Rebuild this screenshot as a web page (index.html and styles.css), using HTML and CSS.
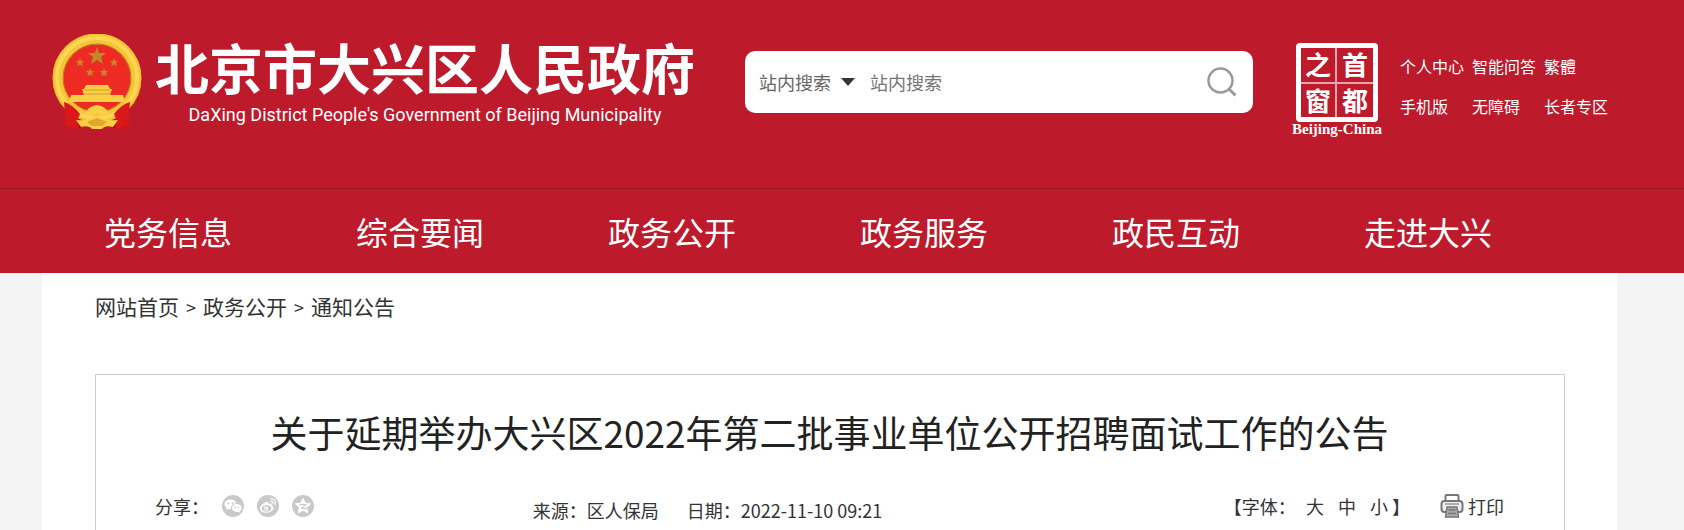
FILE: index.html
```html
<!DOCTYPE html>
<html lang="zh-CN">
<head>
    <meta charset="UTF-8">
    <meta name="viewport" content="width=device-width, initial-scale=1.0">
    <title>关于延期举办大兴区2022年第二批事业单位公开招聘面试工作的公告</title>
    <link rel="stylesheet" href="styles.css">
</head>
<body>
    <header class="header">
        <div class="top">
            <a class="logo" href="#">
                <svg class="emblem" viewBox="0 0 90 96" aria-hidden="true">
                    <path d="M14 68 L12 90 Q20 98 30 94 L45 90 L60 94 Q70 98 78 90 L76 68 Z" fill="#d5161b"/>
                    <path d="M19 76 L18 93 M26 80 L28 94 M71 76 L72 93 M64 80 L62 94" stroke="#9f0f16" stroke-width="2" fill="none"/>
                    <circle cx="45" cy="44" r="39" fill="#ee2a24" stroke="#f5c535" stroke-width="11"/>
                    <circle cx="45" cy="44" r="40" fill="none" stroke="#fbd655" stroke-width="4"/>
                    <circle cx="45" cy="44" r="34" fill="none" stroke="#b5761c" stroke-width="1"/>
                    <path d="M12 68 Q20 70 28 80 Q24 88 26 95 L14 91 Z M78 68 Q70 70 62 80 Q66 88 64 95 L76 91 Z" fill="#d9181c"/>
                    <g fill="#c08a2a">
                        <path d="M45 13 L47 19 L54 19 L49 23 L51 30 L45 26 L39 30 L41 23 L36 19 L43 19 Z"/>
                        <path d="M28 24 l1.200 3 3.200 .1 -2.500 2 .9 3.100 -2.800 -1.700 -2.800 1.700 .9 -3.100 -2.500 -2 3.200 -.1z"/>
                        <path d="M62 24 l1.200 3 3.200 .1 -2.500 2 .9 3.100 -2.800 -1.700 -2.800 1.700 .9 -3.100 -2.500 -2 3.200 -.1z"/>
                        <path d="M38 34 l1.200 3 3.200 .1 -2.500 2 .9 3.100 -2.800 -1.700 -2.800 1.700 .9 -3.100 -2.500 -2 3.200 -.1z"/>
                        <path d="M52 34 l1.200 3 3.200 .1 -2.500 2 .9 3.100 -2.800 -1.700 -2.800 1.700 .9 -3.100 -2.500 -2 3.200 -.1z"/>
                    </g>
                    <path d="M34 51 H56 L58 55 H60 L58 61 H71 L73 68 H17 L19 61 H32 L30 55 H32 Z" fill="#f9cf45"/>
                    <path d="M32 56 H58 M31 60 H59" stroke="#d9982a" stroke-width="1"/>
                    <path d="M33 80 Q36 72 45 71 Q54 72 57 80 Q50 84 45 79 Q40 84 33 80 Z" fill="#f9cf45"/>
                    <path d="M24 86 Q36 87 45 82 Q54 87 66 86 L61 93 Q53 91 50 95 H40 Q37 91 29 93 Z" fill="#f9cf45"/>
                    <path d="M35 88 L45 84 L55 88 L50 92 H40 Z" fill="#dfa82c"/>
                </svg>
                <span class="logo-text">
                    <span class="logo-cn">北京市大兴区人民政府</span>
                    <span class="logo-en">DaXing District People's Government of Beijing Municipality</span>
                </span>
            </a>

            <form class="search">
                <select class="search-type" aria-label="搜索范围">
                    <option>站内搜索</option>
                </select>
                <svg class="search-arrow" viewBox="0 0 14 8" aria-hidden="true"><path d="M0 0 H14 L7 8 Z" fill="#333"/></svg>
                <input class="search-input" type="text" placeholder="站内搜索" aria-label="站内搜索">
                <button class="search-btn" type="submit" aria-label="搜索">
                    <svg viewBox="0 0 30 30" fill="none" stroke="#999" stroke-width="2.500"><circle cx="13.500" cy="13.500" r="12"/><path d="M21.500 21.500 L28.500 28.500" stroke-width="3"/></svg>
                </button>
            </form>

            <a class="seal" href="#">
                <span class="seal-box">
                    <span>之</span><span>首</span>
                    <span>窗</span><span>都</span>
                </span>
                <span class="seal-en">Beijing-China</span>
            </a>

            <div class="links">
                <a href="#">个人中心</a>
                <a href="#">智能问答</a>
                <a href="#">繁體</a>
                <a href="#">手机版</a>
                <a href="#">无障碍</a>
                <a href="#">长者专区</a>
            </div>
        </div>

        <nav class="nav">
            <a href="#">党务信息</a>
            <a href="#">综合要闻</a>
            <a href="#">政务公开</a>
            <a href="#">政务服务</a>
            <a href="#">政民互动</a>
            <a href="#">走进大兴</a>
        </nav>
    </header>

    <main class="main">
        <div class="crumbs">
            <a href="#">网站首页</a><span>&gt;</span><a href="#">政务公开</a><span>&gt;</span><a href="#">通知公告</a>
        </div>

        <article class="article">
            <h1>关于延期举办大兴区2022年第二批事业单位公开招聘面试工作的公告</h1>
            <div class="meta">
                <div class="share">
                    <span>分享：</span>
                    <!-- 微信 -->
                    <a href="#" aria-label="微信">
                        <svg viewBox="0 0 22 22">
                            <circle cx="11" cy="11" r="11" fill="#c9c9c9"/>
                            <path d="M8.500 4.500 C5 4.500 2.500 6.700 2.500 9.300 C2.500 10.900 3.300 12.200 4.700 13.100 L4.200 15 L6.500 13.900 L9 14.200 C8.500 10.500 11.500 8.300 14.500 8.300 C13.800 6 11.500 4.500 8.500 4.500 Z" fill="#fff"/>
                            <path d="M14.800 9 C12 9 9.900 10.800 9.900 13 C9.900 15.200 12 16.900 14.800 16.900 L16.400 16.700 L18.200 17.700 L17.800 16 C19 15.300 19.800 14.200 19.800 13 C19.800 10.800 17.600 9 14.800 9 Z" fill="#fff"/>
                            <g fill="#c9c9c9"><circle cx="6.500" cy="8.300" r="1"/><circle cx="10.500" cy="8.300" r="1"/><circle cx="13.200" cy="12" r=".8"/><circle cx="16.500" cy="12" r=".8"/></g>
                        </svg>
                    </a>
                    <!-- 微博 -->
                    <a href="#" aria-label="微博">
                        <svg viewBox="0 0 22 22">
                            <circle cx="11" cy="11" r="11" fill="#c9c9c9"/>
                            <path d="M9.300 7 C10.800 6.500 11.400 7.500 11 8.900 C13.500 8 15 8.500 14.600 10.600 C16 11 16.700 12 16.500 13.300 C16 16 13 17.700 9.500 17.700 C5.800 17.700 3 16 3 13.400 C3 10.800 6.500 7.800 9.300 7 Z" fill="#fff"/>
                            <ellipse cx="9.500" cy="13.400" rx="4.600" ry="3.100" fill="#c9c9c9"/>
                            <circle cx="9" cy="13.600" r="2.200" fill="#fff"/>
                            <circle cx="8.500" cy="14" r=".9" fill="#c9c9c9"/>
                            <path d="M13.500 4 C17 3.300 19.300 6 18.300 9.500 M13.800 6.500 C15.700 6.200 16.600 7.400 16.100 9" fill="none" stroke="#fff" stroke-width="1.200" stroke-linecap="round"/>
                        </svg>
                    </a>
                    <!-- QQ空间 -->
                    <a href="#" aria-label="QQ空间">
                        <svg viewBox="0 0 22 22">
                            <circle cx="11" cy="11" r="11" fill="#c9c9c9"/>
                            <path d="M11 3.500 L13.300 8.200 L18.500 8.900 L14.700 12.600 L15.700 17.800 L11 15.300 L6.300 17.800 L7.300 12.600 L3.500 8.900 L8.700 8.200 Z" fill="#fff" stroke="#fff" stroke-linejoin="round"/>
                            <path d="M7.700 9.800 Q11 8.900 13.800 9.800 L9.500 13.200 Q12 13.900 15.500 13" fill="none" stroke="#c9c9c9" stroke-width="1.200"/>
                        </svg>
                    </a>
                </div>

                <div class="source">
                    <span>来源：区人保局</span>
                    <span>日期：2022-11-10 09:21</span>
                </div>

                <div class="tools">
                    <span class="font-size">【字体：
                        <button type="button">大</button>
                        <button type="button">中</button>
                        <button type="button">小</button>】</span>
                    <button class="print" type="button">
                        <svg viewBox="0 0 24 24" aria-hidden="true">
                            <path d="M5.500 7 V2 Q5.500 1 6.500 1 H17.500 Q18.500 1 18.500 2 V7" fill="#fff" stroke="#777" stroke-width="2"/>
                            <rect x="1.500" y="7" width="21" height="11" rx="3" fill="#eee" stroke="#777" stroke-width="2"/>
                            <path d="M5 10 H19" stroke="#999" stroke-width="1.500"/>
                            <path d="M7 13 H17 L18.500 23 H5.500 Z" fill="#aaa" stroke="#777" stroke-width="1.500"/>
                            <path d="M8.500 16 H15.500 M8 19.500 H16" stroke="#777" stroke-width="1.500"/>
                        </svg>
                        打印
                    </button>
                </div>
            </div>
        </article>
    </main>
</body>
</html>
```
FILE: styles.css
```css
* {
    box-sizing: border-box;
}
body {
    margin: 0;
    background-color: #f4f4f4;
    font-family: "Noto Sans CJK SC", sans-serif;
    font-size: 18px;
    color: #333;
}
a {
    color: inherit;
    text-decoration: none;
}
button, select, input {
    font: inherit;
    color: inherit;
    border: none;
    background: none;
    padding: 0;
    margin: 0;
}
button {
    cursor: pointer;
}
svg {
    display: block;
}

/* 页头 */
.header {
    background-color: #bd1a2c;
    color: #fff;
}
.top {
    display: flex;
    align-items: flex-start;
    height: 188px;
    padding: 34px 68px 0 52px;
}
.logo {
    display: flex;
    gap: 13px;
}
.emblem {
    width: 90px;
    height: 96px;
}
.logo-text {
    display: flex;
    flex-direction: column;
    align-items: center;
    padding-top: 3px;
}
.logo-cn {
    font-size: 54px;
    font-weight: bold;
    line-height: 60px;
    white-space: nowrap;
}
.logo-en {
    font-family: Roboto, sans-serif;
    font-size: 18px;
    line-height: 36px;
    white-space: nowrap;
}
.search {
    flex: 1;
    display: flex;
    align-items: center;
    height: 62px;
    margin: 17px 39px 0 50px;
    padding: 0 16px 0 14px;
    border-radius: 10px;
    background-color: #fff;
    color: #666;
}
.search-type {
    appearance: none;
}
.search-arrow {
    width: 14px;
    height: 8px;
    margin: 0 15px 0 10px;
}
.search-input {
    flex: 1;
    min-width: 0;
    outline: none;
}
.search-input::placeholder {
    color: #757575;
}
.search-btn svg {
    width: 30px;
    height: 30px;
}

/* 首都之窗 */
.seal {
    display: flex;
    flex-direction: column;
    align-items: center;
    margin: 9px 18px 0 0;
}
.seal-box {
    display: grid;
    grid-template-columns: 1fr 1fr;
    width: 82px;
    height: 79px;
    border: 5px solid #fff;
    border-radius: 4px;
    font-size: 26px;
    font-weight: bold;
    line-height: 32px;
    text-align: center;
}
.seal-box span:nth-child(odd) {
    border-right: 2px solid #e6a5ac;
}
.seal-box span:nth-child(-n+2) {
    border-bottom: 2px solid #e6a5ac;
}
.seal-en {
    font-family: "Liberation Serif", serif;
    font-size: 15px;
    font-weight: bold;
    line-height: 14px;
}
.links {
    display: grid;
    grid-template-columns: repeat(3, 72px);
    row-gap: 16px;
    padding-top: 20px;
    font-size: 16px;
    line-height: 24px;
    white-space: nowrap;
}

/* 导航 */
.nav {
    display: flex;
    border-top: 1px solid #8f1820;
    padding: 0 67px 0 104px;
}
.nav a {
    flex: 0 0 252px;
    font-size: 32px;
    line-height: 84px;
}

/* 正文 */
.main {
    margin: 0 67px 0 42px;
    padding: 15px 52px 0 53px;
    background-color: #fff;
}
.crumbs {
    font-size: 21px;
    line-height: 36px;
}
.crumbs span {
    margin: 0 7px;
    font-size: 18px;
}
.article {
    margin-top: 49px;
    padding: 33px 60px 16px 59px;
    border: 1px solid #ccc;
    border-bottom: none;
}
h1 {
    margin: 0;
    font-size: 37px;
    font-weight: normal;
    line-height: 48px;
    text-align: center;
    color: #222;
}
.meta {
    display: grid;
    grid-template-columns: 28% 1fr auto;
    align-items: start;
    margin-top: 36px;
    line-height: 28px;
}
.share {
    display: flex;
    align-items: center;
    gap: 13px;
}
.share svg {
    width: 22px;
    height: 22px;
}
.source {
    display: flex;
    gap: 28px;
    padding-top: 4px;
}
.tools {
    display: flex;
    gap: 30px;
}
.font-size button {
    margin: 0 4px 0 6px;
}
.print {
    display: flex;
    align-items: center;
    gap: 4px;
}
.print svg {
    width: 24px;
    height: 24px;
}
```
